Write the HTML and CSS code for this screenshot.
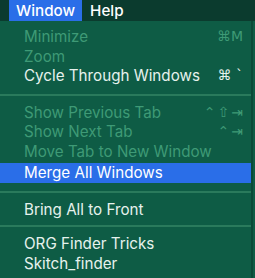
FILE: index.html
```html
<!DOCTYPE html>
<html lang="en">
<head>
    <meta charset="UTF-8">
    <title>Window menu</title>
    <link rel="stylesheet" href="styles.css">
</head>
<body>
    <div class="menubar">
        <span class="bar-item active">Window</span>
        <span class="bar-item">Help</span>
    </div>
    <div class="menu">
        <div class="item disabled"><span>Minimize</span><span class="key">⌘M</span></div>
        <div class="item disabled"><span>Zoom</span></div>
        <div class="item"><span>Cycle Through Windows</span><span class="key">⌘ `</span></div>
        <div class="sep"></div>
        <div class="item disabled"><span>Show Previous Tab</span><span class="key wide">⌃⇧⇥</span></div>
        <div class="item disabled"><span>Show Next Tab</span><span class="key wide">⌃⇥</span></div>
        <div class="item disabled"><span>Move Tab to New Window</span></div>
        <div class="item selected"><span>Merge All Windows</span></div>
        <div class="sep"></div>
        <div class="item"><span>Bring All to Front</span></div>
        <div class="sep small"></div>
        <div class="item"><span>ORG Finder Tricks</span></div>
        <div class="item"><span>Skitch_finder</span></div>
    </div>
</body>
</html>
```

FILE: styles.css
```css
body {
    margin: 0;
    width: 255px;
    height: 278px;
    overflow: hidden;
    font-family: Inter, "Liberation Sans", sans-serif;
    font-size: 15.2px;
    background-color: #0e5c45;
    color: #e6f2ed;
}
.menubar {
    display: flex;
    height: 21px;
    padding-left: 9px;
    background-color: #0b3b2e;
}
.bar-item {
    padding: 0 8px;
    line-height: 21px;
    color: #ffffff;
    font-weight: 500;
}
.bar-item.active {
    padding: 0 7px;
    background-color: #2a6ee8;
}
.menu {
    width: 253px;
    height: 257px;
    padding-top: 6px;
    box-sizing: border-box;
    border-right: 2px solid #0a4a37;
}
.item {
    display: flex;
    justify-content: space-between;
    height: 19.5px;
    line-height: 19.5px;
    padding: 0 8px 0 24px;
}
.item.disabled {
    color: #3e9a76;
}
.item.selected {
    background-color: #2a6ee8;
    color: #ffffff;
    margin-top: 2px;
}
.key {
    font-family: "DejaVu Sans", sans-serif;
    font-size: 14px;
}
.key.wide {
    letter-spacing: 2px;
    margin-right: -2px;
}
.sep {
    height: 2px;
    margin: 8px 0 7px;
    background-color: #2a7a5c;
}
.sep.small {
    margin: 6px 0 7px;
}
```
